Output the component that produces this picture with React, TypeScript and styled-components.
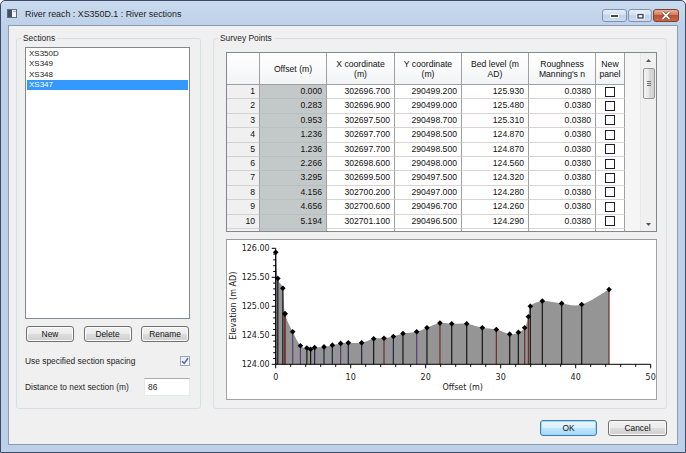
import React from "react";
import styled, { createGlobalStyle } from "styled-components";

const GlobalStyle = createGlobalStyle`
  html, body { margin: 0; padding: 0; }
  body {
    width: 686px;
    height: 453px;
    overflow: hidden;
    font-family: "Liberation Sans", Arial, sans-serif;
    color: #1e1e1e;
  }
  #root { width: 686px; height: 453px; }
`;

const Window = styled.div`
  width: 686px;
  height: 453px;
  box-sizing: border-box;
  border: 1px solid #3f4b68;
  border-radius: 5px 5px 0 0;
  background: linear-gradient(#cadbef, #bcd0e8 26px, #bcd0e8);
  display: flex;
  flex-direction: column;
`;

const TitleBar = styled.div`
  height: 24px;
  display: flex;
  align-items: center;
  padding: 1px 6px 0 6px;
  box-sizing: border-box;
`;

const TitleText = styled.span`
  margin-left: 8px;
  font-size: 8.9px;
  color: #1b1b1b;
`;

const CaptionButtons = styled.div`
  margin-left: auto;
  align-self: flex-start;
  margin-top: 7px;
  display: flex;
  gap: 1px;
`;

const CaptionButton = styled.div<{ $w: number; $close?: boolean }>`
  width: ${(p) => p.$w}px;
  height: 13px;
  box-sizing: border-box;
  border: 1px solid ${(p) => (p.$close ? "#7a4130" : "#7f93b0")};
  border-radius: 3px;
  background: ${(p) =>
    p.$close
      ? "linear-gradient(#e8b19a, #d0765a 50%, #c0502f 50%, #c86a48)"
      : "linear-gradient(#e4edf7, #d1dff0 50%, #c1d3ea 50%, #cddcee)"};
  display: flex;
  align-items: center;
  justify-content: center;
`;

const Client = styled.div`
  flex: 1;
  margin: 0 7px 7px;
  border: 1px solid #8c9cb6;
  background: #f0f0f0;
  padding: 7px 10px 8px 7px;
  display: flex;
  flex-direction: column;
`;

const GroupsRow = styled.div`
  height: 376px;
  display: flex;
  gap: 12px;
`;

const Group = styled.fieldset<{ $w?: number }>`
  margin: 0;
  padding: 0;
  min-width: 0;
  height: 100%;
  box-sizing: border-box;
  border: 1px solid #d5dfe5;
  border-radius: 3px;
  ${(p) => (p.$w ? `width: ${p.$w}px; flex: none;` : "flex: 1;")}
`;

const Legend = styled.legend`
  margin-left: 4px;
  padding: 0 2px;
  font-size: 8.4px;
  line-height: 10px;
  color: #1e1e1e;
`;

const SectionsBody = styled.div`
  padding: 4px 10px 0 8px;
  display: flex;
  flex-direction: column;
`;

const ListBox = styled.div`
  height: 272px;
  box-sizing: border-box;
  border: 1px solid #828790;
  background: #fff;
  padding: 1px 1px 0 1px;
`;

const ListItem = styled.div<{ $selected?: boolean }>`
  height: 10.3px;
  line-height: 10.3px;
  padding-left: 2px;
  font-size: 8px;
  color: ${(p) => (p.$selected ? "#fff" : "#1a1a1a")};
  background: ${(p) => (p.$selected ? "#3399ff" : "transparent")};
`;

const ButtonRow = styled.div`
  margin-top: 7px;
  padding: 0 1px;
  display: flex;
  justify-content: space-between;
`;

const Button = styled.div<{ $w: number; $default?: boolean }>`
  width: ${(p) => p.$w}px;
  height: 16px;
  box-sizing: border-box;
  border: 1px solid ${(p) => (p.$default ? "#3c7fb1" : "#707070")};
  border-radius: 3px;
  background: ${(p) =>
    p.$default
      ? "linear-gradient(#eaf6fd, #d9f0fc 50%, #bee6fd 50%, #a7d9f5)"
      : "linear-gradient(#f2f2f2, #ebebeb 50%, #dddddd 50%, #cfcfcf)"};
  box-shadow: inset 0 0 0 1px ${(p) => (p.$default ? "#9fd6f5" : "#fbfbfb")};
  display: flex;
  align-items: center;
  justify-content: center;
  font-size: 8.4px;
  color: #111;
`;

const OptionRow = styled.div<{ $top: number; $h: number }>`
  margin-top: ${(p) => p.$top}px;
  height: ${(p) => p.$h}px;
  display: flex;
  align-items: center;
  justify-content: space-between;
  font-size: 8.4px;
  color: #1e1e1e;
`;

const CheckBox = styled.div<{ $dark?: boolean }>`
  width: 10px;
  height: 10px;
  box-sizing: border-box;
  border: 1px solid ${(p) => (p.$dark ? "#1f1f33" : "#9ca6b6")};
  background: ${(p) => (p.$dark ? "#fff" : "linear-gradient(#e6ebf2, #fafbfd)")};
  display: flex;
  align-items: center;
  justify-content: center;
`;

const TextBox = styled.div`
  width: 46px;
  height: 18px;
  box-sizing: border-box;
  border: 1px solid #e3e9ef;
  border-top-color: #abadb3;
  background: #fff;
  padding-left: 3px;
  display: flex;
  align-items: center;
  font-size: 8.4px;
`;

const SurveyBody = styled.div`
  padding: 9px 9px 8px 12px;
  display: flex;
  flex-direction: column;
`;

const GridFrame = styled.div`
  height: 180px;
  box-sizing: border-box;
  border: 1px solid #828790;
  display: flex;
  overflow: hidden;
`;

const GridPane = styled.div`
  flex: 1;
  background: #f5f5f5;
  overflow: hidden;
`;

const DataGrid = styled.div`
  width: 398px;
  display: grid;
  grid-template-columns: 33px 67px 68px 67px 67px 67px 29px;
  grid-template-rows: 32px;
  grid-auto-rows: 14.4px;
  font-size: 8.65px;
  color: #111;
`;

const HeadCell = styled.div`
  box-sizing: border-box;
  border-right: 1px solid #a0a0a0;
  border-bottom: 1px solid #a0a0a0;
  background: linear-gradient(#ffffff, #f3f4f6);
  display: flex;
  align-items: center;
  justify-content: center;
  text-align: center;
  line-height: 10px;
`;

const RowHead = styled.div`
  box-sizing: border-box;
  border-right: 1px solid #a0a0a0;
  border-bottom: 1px solid #d2d2d2;
  background: #f0f0f0;
  text-align: right;
  padding-right: 4px;
  line-height: 13.4px;
`;

const Cell = styled.div<{ $shade?: boolean; $center?: boolean }>`
  box-sizing: border-box;
  border-right: 1px solid #a0a0a0;
  border-bottom: 1px solid ${(p) => (p.$shade ? "#b9bebe" : "#d9d3d3")};
  background: ${(p) => (p.$shade ? "#c3c8c8" : "#ffffff")};
  text-align: right;
  padding-right: 4px;
  line-height: 13.4px;
  ${(p) =>
    p.$center &&
    "display: flex; align-items: center; justify-content: center; padding-right: 0;"}
`;

const ScrollBar = styled.div`
  width: 16px;
  box-sizing: border-box;
  border-left: 1px solid #e6e6e6;
  background: #f0f0f0;
  display: flex;
  flex-direction: column;
  align-items: center;
`;

const ArrowBox = styled.div`
  height: 14px;
  width: 100%;
  display: flex;
  align-items: center;
  justify-content: center;
`;

const Thumb = styled.div`
  width: 12px;
  height: 31px;
  margin: 1px 0 0 1px;
  box-sizing: border-box;
  border: 1px solid #979797;
  border-radius: 2px;
  background: linear-gradient(90deg, #f4f4f4, #e7e7e7 50%, #d9d9d9 50%, #d2d2d2);
  display: flex;
  align-items: center;
  justify-content: center;
`;

const Spacer = styled.div`
  flex: 1;
`;

const ChartBox = styled.div`
  margin-top: 7px;
  height: 161px;
  box-sizing: border-box;
  border: 1px solid #a3a3a3;
  border-top-color: #9a9a9a;
  background: #fff;
  overflow: hidden;
`;

const Footer = styled.div`
  margin-top: 11px;
  height: 16px;
  display: flex;
  justify-content: flex-end;
  gap: 11px;
`;

const sections = ["XS350D", "XS349", "XS348", "XS347"];

// the 11th row only shows its top edge, so its values stay empty
const rows: string[][] = [
  ["0.000", "302696.700", "290499.200", "125.930", "0.0380"],
  ["0.283", "302696.900", "290499.000", "125.480", "0.0380"],
  ["0.953", "302697.500", "290498.700", "125.310", "0.0380"],
  ["1.236", "302697.700", "290498.500", "124.870", "0.0380"],
  ["1.236", "302697.700", "290498.500", "124.870", "0.0380"],
  ["2.266", "302698.600", "290498.000", "124.560", "0.0380"],
  ["3.295", "302699.500", "290497.500", "124.320", "0.0380"],
  ["4.156", "302700.200", "290497.000", "124.280", "0.0380"],
  ["4.656", "302700.600", "290496.700", "124.260", "0.0380"],
  ["5.194", "302701.100", "290496.500", "124.290", "0.0380"],
  ["", "", "", "", ""],
];

const stemColors: Record<string, string> = {
  k: "#161616",
  n: "#23234a",
  p: "#5b3a7a",
  r: "#6b2d2d",
};

const points: [number, number, string][] = [
  [0, 125.93, "p"], [0.283, 125.48, "k"], [0.953, 125.31, "k"], [1.236, 124.87, "r"],
  [1.236, 124.87, "r"], [2.266, 124.56, "p"], [3.295, 124.32, "p"], [4.156, 124.28, "k"],
  [4.656, 124.26, "k"], [5.194, 124.29, "n"], [6.44, 124.3, "n"], [7.55, 124.33, "n"],
  [8.66, 124.36, "p"], [9.68, 124.37, "n"], [11.46, 124.37, "n"], [13.06, 124.44, "k"],
  [14.44, 124.45, "r"], [15.69, 124.48, "n"], [16.97, 124.53, "k"], [18.8, 124.56, "p"],
  [20.17, 124.63, "k"], [21.9, 124.71, "r"], [23.47, 124.7, "k"], [25.47, 124.7, "k"],
  [27.55, 124.63, "k"], [29.42, 124.6, "r"], [31.2, 124.52, "k"], [32.35, 124.55, "k"],
  [33.2, 124.63, "r"], [33.69, 124.82, "r"], [33.95, 125.0, "k"], [35.55, 125.09, "k"],
  [38.13, 125.05, "k"], [40.8, 125.03, "k"], [44.44, 125.29, "r"],
];

const X0 = 48.7;
const XS = 7.5;
const Y124 = 124.3;
const YS = 58;
const px = (o: number) => X0 + o * XS;
const py = (e: number) => Y124 - (e - 124) * YS;

function fillPath(): string {
  const pts: { x: number; y: number }[] = [];
  points.forEach(([o, e]) => {
    const last = pts[pts.length - 1];
    const x = px(o);
    if (!last || Math.abs(last.x - x) > 0.01) pts.push({ x, y: py(e) });
  });
  let d = `M${pts[0].x},${Y124} L${pts[0].x},${pts[0].y}`;
  for (let i = 0; i < pts.length - 1; i++) {
    const p0 = pts[i - 1] ?? pts[i];
    const p1 = pts[i];
    const p2 = pts[i + 1];
    const p3 = pts[i + 2] ?? p2;
    const c1x = p1.x + (p2.x - p0.x) / 6;
    const c1y = p1.y + (p2.y - p0.y) / 6;
    const c2x = p2.x - (p3.x - p1.x) / 6;
    const c2y = p2.y - (p3.y - p1.y) / 6;
    d += ` C${c1x},${c1y} ${c2x},${c2y} ${p2.x},${p2.y}`;
  }
  d += ` L${pts[pts.length - 1].x},${Y124} Z`;
  return d;
}

const chartFont = "'DejaVu Sans', Verdana, sans-serif";

const ProfileChart: React.FC = () => {
  const yTicks = Array.from({ length: 21 }, (_, i) => i);
  const xTicks = Array.from({ length: 26 }, (_, i) => i * 2);
  return (
    <svg width="429" height="159" viewBox="0 0 429 159">
      <path d={fillPath()} fill="#959595" />
      {points.map(([o, e, c], i) => (
        <line
          key={`s${i}`}
          x1={px(o)}
          y1={py(e)}
          x2={px(o)}
          y2={Y124}
          stroke={stemColors[c]}
          strokeWidth="1.2"
        />
      ))}
      {points.map(([o, e], i) => {
        const x = px(o);
        const y = py(e);
        return (
          <polygon
            key={`m${i}`}
            points={`${x},${y - 2.8} ${x + 2.8},${y} ${x},${y + 2.8} ${x - 2.8},${y}`}
            fill="#000"
          />
        );
      })}
      <line x1={X0} y1={py(126)} x2={X0} y2={Y124} stroke="#000" />
      <line x1={X0} y1={Y124} x2={px(50)} y2={Y124} stroke="#000" />
      {yTicks.map((i) => {
        const y = py(124 + i * 0.1);
        const major = i % 5 === 0;
        return (
          <g key={`y${i}`}>
            <line x1={X0 - (major ? 4 : 2.5)} y1={y} x2={X0} y2={y} stroke="#000" />
            {major && (
              <text x={X0 - 6} y={y + 3} textAnchor="end" fontSize="8" fontFamily={chartFont} fill="#222">
                {(124 + i * 0.1).toFixed(2)}
              </text>
            )}
          </g>
        );
      })}
      {xTicks.map((v) => {
        const x = px(v);
        const major = v % 10 === 0;
        return (
          <g key={`x${v}`}>
            <line x1={x} y1={Y124} x2={x} y2={Y124 + (major ? 4 : 2.5)} stroke="#000" />
            {major && (
              <text x={x} y={Y124 + 15.5} textAnchor="middle" fontSize="8" fontFamily={chartFont} fill="#222">
                {v}
              </text>
            )}
          </g>
        );
      })}
      <text x="235.7" y="149.5" textAnchor="middle" fontSize="8" fontFamily={chartFont} fill="#222">
        Offset (m)
      </text>
      <text
        transform="translate(8.7 65.7) rotate(-90)"
        textAnchor="middle"
        fontSize="8"
        fontFamily={chartFont}
        fill="#222"
      >
        Elevation (m AD)
      </text>
    </svg>
  );
};

const Tick: React.FC<{ color: string }> = ({ color }) => (
  <svg width="8" height="8" viewBox="0 0 8 8">
    <path d="M1 4.2 L3.2 6.4 L7 1.2" fill="none" stroke={color} strokeWidth="1.5" />
  </svg>
);

const App: React.FC = () => {
  return (
    <>
      <GlobalStyle />
      <Window>
        <TitleBar>
          <svg width="10" height="9" viewBox="0 0 10 9">
            <rect x="0.5" y="0.5" width="9" height="8" fill="#f3f5f8" stroke="#5d6b80" />
            <rect x="1" y="1" width="4" height="7" fill="#40516e" />
            <rect x="6" y="2" width="3" height="1" fill="#9aa6b8" />
          </svg>
          <TitleText>River reach : XS350D.1 : River sections</TitleText>
          <CaptionButtons>
            <CaptionButton $w={25}>
              <svg width="9" height="5" viewBox="0 0 9 5">
                <rect x="0.5" y="1.5" width="8" height="3" fill="#3d4a5e" stroke="#fff" strokeWidth="1" />
              </svg>
            </CaptionButton>
            <CaptionButton $w={24}>
              <svg width="9" height="8" viewBox="0 0 9 8">
                <rect x="0.5" y="0.5" width="8" height="7" fill="#fff" />
                <rect x="2" y="2.5" width="5" height="3.5" fill="none" stroke="#3d4a5e" strokeWidth="1.4" />
              </svg>
            </CaptionButton>
            <CaptionButton $w={26} $close>
              <svg width="10" height="9" viewBox="0 0 10 9">
                <path d="M1.5 1 L8.5 8 M8.5 1 L1.5 8" stroke="#5a2418" strokeWidth="3" />
                <path d="M1.5 1 L8.5 8 M8.5 1 L1.5 8" stroke="#fff" strokeWidth="1.8" />
              </svg>
            </CaptionButton>
          </CaptionButtons>
        </TitleBar>
        <Client>
          <GroupsRow>
            <Group $w={185}>
              <Legend>Sections</Legend>
              <SectionsBody>
                <ListBox>
                  {sections.map((s, i) => (
                    <ListItem key={s} $selected={i === 3}>
                      {s}
                    </ListItem>
                  ))}
                </ListBox>
                <ButtonRow>
                  <Button $w={48}>New</Button>
                  <Button $w={48}>Delete</Button>
                  <Button $w={48}>Rename</Button>
                </ButtonRow>
                <OptionRow $top={13} $h={11}>
                  <span>Use specified section spacing</span>
                  <CheckBox>
                    <Tick color="#4f66a8" />
                  </CheckBox>
                </OptionRow>
                <OptionRow $top={12} $h={18}>
                  <span>Distance to next section (m)</span>
                  <TextBox>86</TextBox>
                </OptionRow>
              </SectionsBody>
            </Group>
            <Group>
              <Legend>Survey Points</Legend>
              <SurveyBody>
                <GridFrame>
                  <GridPane>
                    <DataGrid>
                      <HeadCell />
                      <HeadCell>Offset (m)</HeadCell>
                      <HeadCell>
                        X coordinate
                        <br />
                        (m)
                      </HeadCell>
                      <HeadCell>
                        Y coordinate
                        <br />
                        (m)
                      </HeadCell>
                      <HeadCell>
                        Bed level (m
                        <br />
                        AD)
                      </HeadCell>
                      <HeadCell>
                        Roughness
                        <br />
                        Manning's n
                      </HeadCell>
                      <HeadCell>
                        New
                        <br />
                        panel
                      </HeadCell>
                      {rows.map((r, i) => (
                        <React.Fragment key={i}>
                          <RowHead>{r[0] ? i + 1 : ""}</RowHead>
                          <Cell $shade>{r[0]}</Cell>
                          <Cell>{r[1]}</Cell>
                          <Cell>{r[2]}</Cell>
                          <Cell>{r[3]}</Cell>
                          <Cell>{r[4]}</Cell>
                          <Cell $center>
                            <CheckBox $dark />
                          </Cell>
                        </React.Fragment>
                      ))}
                    </DataGrid>
                  </GridPane>
                  <ScrollBar>
                    <ArrowBox>
                      <svg width="5" height="3" viewBox="0 0 5 3">
                        <path d="M0 3 L2.5 0 L5 3 Z" fill="#555" />
                      </svg>
                    </ArrowBox>
                    <Thumb>
                      <svg width="4" height="5" viewBox="0 0 4 5">
                        <path d="M0 0.5 H4 M0 2.5 H4 M0 4.5 H4" stroke="#6b6b6b" strokeWidth="1" />
                      </svg>
                    </Thumb>
                    <Spacer />
                    <ArrowBox>
                      <svg width="5" height="3" viewBox="0 0 5 3">
                        <path d="M0 0 L2.5 3 L5 0 Z" fill="#555" />
                      </svg>
                    </ArrowBox>
                  </ScrollBar>
                </GridFrame>
                <ChartBox>
                  <ProfileChart />
                </ChartBox>
              </SurveyBody>
            </Group>
          </GroupsRow>
          <Footer>
            <Button $w={57} $default>
              OK
            </Button>
            <Button $w={59}>Cancel</Button>
          </Footer>
        </Client>
      </Window>
    </>
  );
};

export default App;
